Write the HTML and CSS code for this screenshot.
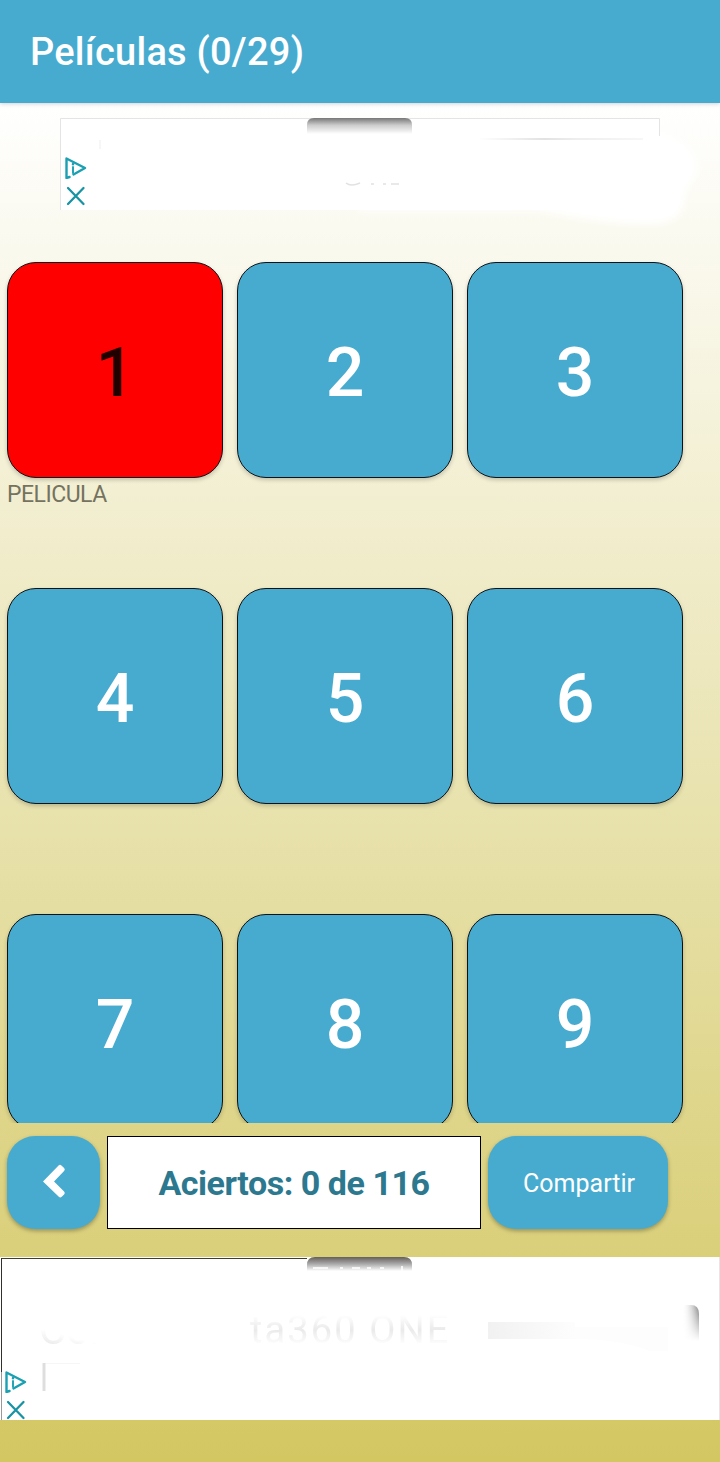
FILE: index.html
```html
<!DOCTYPE html>
<html lang="es">
<head>
<meta charset="utf-8">
<title>Películas</title>
<link rel="stylesheet" href="styles.css">
</head>
<body>
<div class="app">
  <header class="topbar"><h1 class="title">Películas (0/29)</h1></header>
  <main class="content">
    <section class="ad ad-top">
      <svg class="ad-art" width="660" height="120" viewBox="0 0 660 120">
        <defs>
          <linearGradient id="tab" x1="0" y1="0" x2="0" y2="1"><stop offset="0" stop-color="#777"/><stop offset=".45" stop-color="#ccc"/><stop offset="1" stop-color="#fff"/></linearGradient>
          <linearGradient id="line"><stop offset="0" stop-color="#fff"/><stop offset=".4" stop-color="#e2e2e2"/><stop offset=".6" stop-color="#eee"/><stop offset="1" stop-color="#f7f7f7"/></linearGradient>
          <filter id="soft" x="-10%" y="-10%" width="120%" height="120%"><feGaussianBlur stdDeviation="3"/></filter>
        </defs>
        <path d="M300 10H590Q642 24 637 56Q630 65 625 78Q624 106 590 106Q540 106 480 92H300Z" fill="#fff" filter="url(#soft)"/>
        <path d="M0 0H600V92H0Z" fill="#fff"/>
        <path d="M.5 92V.5H599.5V18" fill="none" stroke="#e4e4e4"/>
        <path d="M247 16V7Q247 0 254 0H345Q352 0 352 7V16Z" fill="url(#tab)"/>
        <path d="M418 20h165v2H418z" fill="url(#line)"/>
        <path d="M40 22v9" stroke="#eee"/>
        <path d="M286 65q5 4 14 0M311 66h3M323 66h3M331 66h8" fill="none" stroke="#e2e2e2" stroke-width="1.5"/>
      </svg>
      <div class="ad-marks">
        <svg width="22" height="22" viewBox="0 0 22 22" fill="none" stroke="#1ba0b2" stroke-width="2.4" stroke-linejoin="round" stroke-linecap="round"><path d="M4.500 20L1.500 21V1.500L20 11L8.500 17.500"/><path d="M8 10V16" stroke-width="1.900"/><path d="M8 7V7.200"/></svg>
        <svg width="22" height="22" viewBox="0 0 22 22" fill="none" stroke="#1893a4" stroke-width="2.300" stroke-linecap="round"><path d="M3 3L18.500 19M18.500 3L3 19"/></svg>
      </div>
    </section>
    <section class="levels">
      <div class="level"><button class="tile tile-current">1</button><span class="caption">PELICULA</span></div>
      <div class="level"><button class="tile">2</button></div>
      <div class="level"><button class="tile">3</button></div>
      <div class="level"><button class="tile">4</button></div>
      <div class="level"><button class="tile">5</button></div>
      <div class="level"><button class="tile">6</button></div>
      <div class="level"><button class="tile">7</button></div>
      <div class="level"><button class="tile">8</button></div>
      <div class="level"><button class="tile">9</button></div>
    </section>
    <nav class="actions">
      <button class="btn btn-back" aria-label="Atrás"><svg width="23" height="35" viewBox="0 0 24 36"><path d="M16.500 1Q18 0 19.500 1.500L22 4Q23.500 5.500 22 7L11.500 18L22 28.500Q23.500 30 22 31.500L19.500 34Q18 35.500 16.500 34L0 18Z" fill="#fff"/></svg></button>
      <div class="score">Aciertos: 0 de 116</div>
      <button class="btn btn-share">Compartir</button>
    </nav>
    <section class="ad ad-bottom">
      <svg class="ad-art" width="720" height="163" viewBox="0 0 720 163">
        <defs>
          <linearGradient id="edge"><stop offset="0" stop-color="#fff" stop-opacity="0"/><stop offset="1" stop-color="#888"/></linearGradient>
          <linearGradient id="fadeDown" x1="0" y1="0" x2="0" y2="1"><stop offset="0" stop-color="#fff" stop-opacity="0"/><stop offset="1" stop-color="#fff"/></linearGradient>
          <linearGradient id="smudge"><stop offset="0" stop-color="#f1f1f1"/><stop offset=".4" stop-color="#f6f6f6"/><stop offset="1" stop-color="#fdfdfd"/></linearGradient>
          <linearGradient id="tabDark" x1="0" y1="0" x2="0" y2="1"><stop offset="0" stop-color="#655f5c"/><stop offset=".5" stop-color="#aaa"/><stop offset="1" stop-color="#fff"/></linearGradient>
          <linearGradient id="conFade" gradientUnits="userSpaceOnUse" x1="39" y1="56" x2="30" y2="92"><stop offset=".4" stop-color="#fff"/><stop offset="1" stop-color="#ddd"/></linearGradient>
          <linearGradient id="oneFade" gradientUnits="userSpaceOnUse" x1="0" y1="58" x2="0" y2="88"><stop offset="0" stop-color="#fff"/><stop offset=".5" stop-color="#eaeaea"/><stop offset="1" stop-color="#fff"/></linearGradient>
          <filter id="haze"><feGaussianBlur stdDeviation=".6"/></filter>
        </defs>
        <path d="M0 0H720V163H0Z" fill="#fff"/>
        <path d="M719.500 0V163" stroke="#e6e6e6"/>
        <path d="M1 1.500H307" stroke="#413e30"/>
        <path d="M1.500 1V163" stroke="#999"/>
        <path d="M1.500 1V115" stroke="#30302c"/>
        <path d="M307 14V8Q307 0 315 0H404Q412 0 412 8V14Z" fill="url(#tabDark)"/>
        <path d="M313 11h15M340 11h3M352 11h8M367 11h4M380 11h4M402 9v5" stroke="#fff" stroke-width="2" opacity=".8"/>
        <g filter="url(#haze)">
          <text x="39" y="87" class="ghost" fill="url(#conFade)">Con</text>
          <text x="250" y="86" class="ghost ghost-wide" fill="url(#oneFade)">ta360 ONE</text>
        </g>
        <path d="M488 65H575V82H488Z" fill="url(#smudge)" filter="url(#haze)"/>
        <path d="M575 70H668V94H650Q620 82 575 82Z" fill="#fdfdfd"/>
        <path d="M43.500 134V106.500H80" fill="none" stroke="#f6f6f6"/>
        <path d="M42.500 106h3v28h-3z" fill="#dedede"/>
        <path d="M682 48H691Q699 48 699 57V90H682Z" fill="url(#edge)"/>
        <path d="M682 50H700V84H682Z" fill="url(#fadeDown)"/>
        <path d="M682 84H700V92H682Z" fill="#fff"/>
      </svg>
      <div class="ad-marks">
        <svg width="22" height="22" viewBox="0 0 22 22" fill="none" stroke="#1ba0b2" stroke-width="2.4" stroke-linejoin="round" stroke-linecap="round"><path d="M4.500 20L1.500 21V1.500L20 11L8.500 17.500"/><path d="M8 10V16" stroke-width="1.900"/><path d="M8 7V7.200"/></svg>
        <svg width="22" height="22" viewBox="0 0 22 22" fill="none" stroke="#1893a4" stroke-width="2.300" stroke-linecap="round"><path d="M3 3L18.500 19M18.500 3L3 19"/></svg>
      </div>
    </section>
  </main>
</div>
</body>
</html>
```

FILE: styles.css
```css
* { box-sizing: border-box; }
body { margin: 0; font-family: Roboto, "Liberation Sans", sans-serif; }
button { font-family: inherit; padding: 0; }
.app { display: flex; flex-direction: column; width: 720px; height: 1462px; overflow: hidden; }
.topbar { display: flex; align-items: center; flex: none; height: 103px; padding: 0 30px; background: #47abd0; box-shadow: 0 1px 4px rgba(0, 0, 0, .18); z-index: 1; }
.title { margin: 0; font-size: 38px; line-height: 48px; font-weight: 500; color: #fff; letter-spacing: .25px; }
.content { display: flex; flex-direction: column; flex: 1; min-height: 0; padding-top: 15px; background: linear-gradient(#fff, #d3c762); }

.ad { position: relative; flex: none; }
.ad-art { display: block; overflow: visible; }
.ad-marks { position: absolute; left: 5px; display: flex; flex-direction: column; gap: 6px; }
.ad-marks svg { display: block; }
.ad-top { width: 660px; height: 93px; margin-left: 60px; }
.ad-top .ad-marks { top: 39px; }
.ad-bottom { height: 163px; }
.ad-bottom .ad-marks { top: 114px; }
.ghost { font-size: 42px; }
.ghost-wide { font-size: 38px; letter-spacing: 2.1px; }

.levels { display: grid; grid-template-columns: repeat(3, 216px); grid-auto-rows: 326px; column-gap: 14px; flex: none; height: 873px; margin-top: 39px; padding: 12px 7px 0; overflow: hidden; }
.level { display: flex; flex-direction: column; }
.tile { width: 216px; height: 216px; border: 1px solid #0c1216; border-radius: 29px; background: #47abd0; color: #fff; font-size: 68px; font-weight: 500; line-height: 80px; padding-top: 6px; box-shadow: 0 2px 4px rgba(0, 0, 0, .2); }
.tile-current { background: #f00; color: #210000; }
.caption { margin-top: 3px; font-size: 23px; line-height: 28px; color: #75735f; letter-spacing: -.5px; }

.actions { display: flex; gap: 7px; flex: none; height: 93px; margin: 13px 0 28px; padding-left: 7px; }
.btn { display: flex; align-items: center; justify-content: center; border: 0; border-radius: 28px; background: #47abd0; color: #fff; box-shadow: 0 2px 4px rgba(0, 0, 0, .3); }
.btn-back { width: 93px; }
.btn-back svg { margin-left: 2px; margin-top: -3px; }
.btn-share { width: 180px; font-size: 25px; padding: 2px 0 0 2px; }
.score { display: flex; align-items: center; justify-content: center; width: 374px; border: 1px solid #000; background: #fff; color: #2b788f; font-size: 34px; font-weight: 700; letter-spacing: -.46px; padding-top: 1px; }
```
